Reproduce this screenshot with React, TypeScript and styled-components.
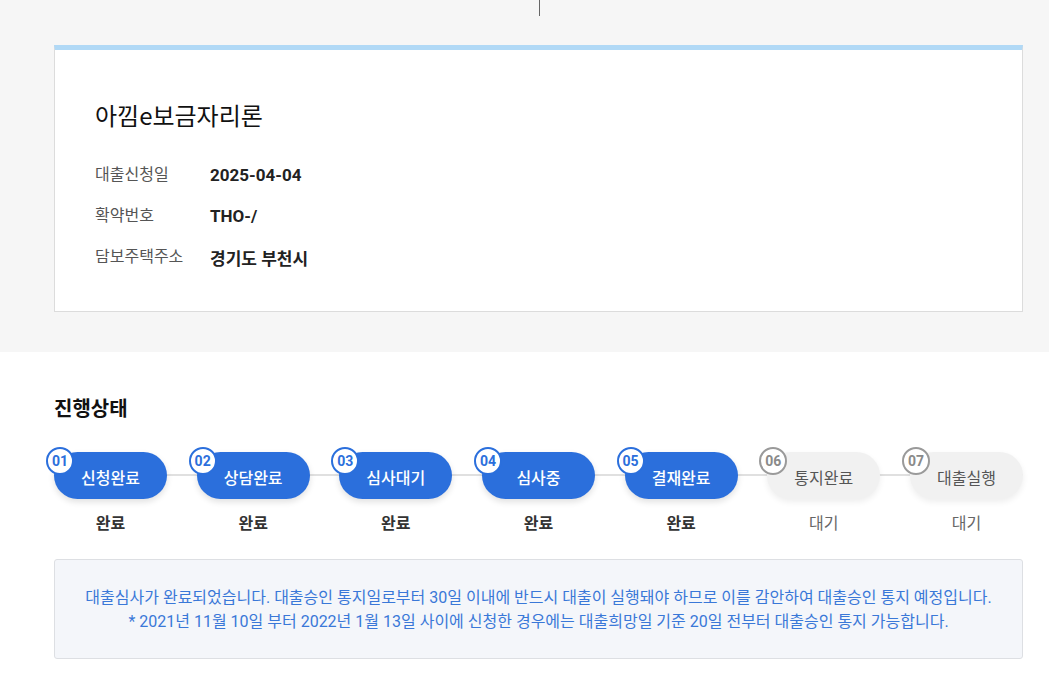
import styled, { createGlobalStyle } from 'styled-components';

const GlobalStyle = createGlobalStyle`
  * {
    box-sizing: border-box;
  }
  body {
    margin: 0;
    background: #fff;
    font-family: Roboto, 'Noto Sans CJK KR', 'Noto Sans', sans-serif;
    color: #222;
  }
`;

const LOAN_INFO = [
  { label: '대출신청일', value: '2025-04-04' },
  { label: '확약번호', value: 'THO-/' },
  { label: '담보주택주소', value: '경기도 부천시' },
];

const STEPS = [
  { no: '01', name: '신청완료', done: true },
  { no: '02', name: '상담완료', done: true },
  { no: '03', name: '심사대기', done: true },
  { no: '04', name: '심사중', done: true },
  { no: '05', name: '결재완료', done: true },
  { no: '06', name: '통지완료', done: false },
  { no: '07', name: '대출실행', done: false },
];

const App = () => {
  return (
    <>
      <GlobalStyle />
      <StyledTop>
        <StyledDivider />
        <StyledCard>
          <StyledTitle>아낌e보금자리론</StyledTitle>
          <StyledInfoList>
            {LOAN_INFO.map(({ label, value }) => (
              <StyledInfoRow key={label}>
                <StyledLabel>{label}</StyledLabel>
                <StyledValue>{value}</StyledValue>
              </StyledInfoRow>
            ))}
          </StyledInfoList>
        </StyledCard>
      </StyledTop>
      <StyledProgress>
        <StyledSectionTitle>진행상태</StyledSectionTitle>
        <StyledSteps>
          {STEPS.map(({ no, name, done }) => (
            <StyledStep key={no}>
              <StyledPill $done={done}>
                <StyledBadge $done={done}>{no}</StyledBadge>
                {name}
              </StyledPill>
              <StyledStatus $done={done}>{done ? '완료' : '대기'}</StyledStatus>
            </StyledStep>
          ))}
        </StyledSteps>
        <StyledNotice>
          대출심사가 완료되었습니다. 대출승인 통지일로부터 30일 이내에 반드시 대출이 실행돼야 하므로 이를 감안하여 대출승인 통지 예정입니다.
          <br />* 2021년 11월 10일 부터 2022년 1월 13일 사이에 신청한 경우에는 대출희망일 기준 20일 전부터 대출승인 통지 가능합니다.
        </StyledNotice>
      </StyledProgress>
    </>
  );
};

const StyledTop = styled.section`
  background: #f6f6f6;
  padding: 0 26px 40px 54px;
`;

const StyledDivider = styled.div`
  width: 1px;
  height: 16px;
  margin-left: 485px;
  margin-bottom: 29px;
  background: #666;
`;

const StyledCard = styled.div`
  background: #fff;
  border: 1px solid #dcdcdc;
  border-top: 5px solid #b1d9f6;
  padding: 49px 40px 40px;
  height: 267px;
`;

const StyledTitle = styled.h2`
  margin: 0;
  font-family: 'Noto Sans CJK KR', sans-serif;
  font-size: 24px;
  font-weight: 400;
  line-height: 32px;
  color: #111;
`;

const StyledInfoList = styled.dl`
  margin: 32px 0 0;
  display: flex;
  flex-direction: column;
  gap: 17px;
`;

const StyledInfoRow = styled.div`
  display: flex;
  align-items: center;
  height: 24px;
`;

const StyledLabel = styled.dt`
  width: 115px;
  font-family: 'Noto Sans CJK KR', sans-serif;
  font-size: 16px;
  color: #555;
  margin-top: -4px;
`;

const StyledValue = styled.dd`
  margin: 0;
  font-size: 17px;
  font-weight: 700;
  color: #222;
`;

const StyledProgress = styled.section`
  padding: 43px 26px 0 54px;
`;

const StyledSectionTitle = styled.h3`
  margin: 0;
  font-family: 'Noto Sans CJK KR', sans-serif;
  font-size: 20px;
  font-weight: 700;
  line-height: 26px;
  color: #111;
`;

const StyledSteps = styled.ol`
  position: relative;
  list-style: none;
  margin: 31px 0 0;
  padding: 0;
  display: flex;
  justify-content: space-between;
  &::before {
    content: '';
    position: absolute;
    left: 0;
    right: 0;
    top: 22px;
    height: 2px;
    background: #e0e0e0;
  }
`;

const StyledStep = styled.li`
  position: relative;
  display: flex;
  flex-direction: column;
  align-items: center;
  width: 113px;
`;

const StyledPill = styled.div<{ $done: boolean }>`
  position: relative;
  display: flex;
  align-items: center;
  justify-content: center;
  width: 100%;
  height: 47px;
  padding-top: 3px;
  border-radius: 24px;
  background: ${({ $done }) => ($done ? '#2b6fdc' : '#f1f1f1')};
  color: ${({ $done }) => ($done ? '#fff' : '#555')};
  box-shadow: 0 3px 6px rgba(0, 0, 0, ${({ $done }) => ($done ? 0.12 : 0.07)});
  font-family: 'Noto Sans CJK KR', sans-serif;
  font-size: 16px;
  font-weight: ${({ $done }) => ($done ? 500 : 400)};
`;

const StyledBadge = styled.span<{ $done: boolean }>`
  position: absolute;
  left: -8px;
  top: -5px;
  width: 28px;
  height: 28px;
  display: flex;
  align-items: center;
  justify-content: center;
  border-radius: 50%;
  background: #fff;
  border: 2px solid ${({ $done }) => ($done ? '#2b6fdc' : '#9a9a9a')};
  color: ${({ $done }) => ($done ? '#2b6fdc' : '#8a8a8a')};
  font-family: Roboto, sans-serif;
  font-size: 14px;
  font-weight: 700;
`;

const StyledStatus = styled.span<{ $done: boolean }>`
  margin-top: 11px;
  font-family: 'Noto Sans CJK KR', sans-serif;
  font-size: 16px;
  line-height: 24px;
  font-weight: ${({ $done }) => ($done ? 700 : 400)};
  color: ${({ $done }) => ($done ? '#333' : '#666')};
`;

const StyledNotice = styled.div`
  margin-top: 25px;
  padding: 26px 10px 24px;
  background: #f4f6fa;
  border: 1px solid #dddfe3;
  border-radius: 3px;
  text-align: center;
  font-size: 16px;
  line-height: 24px;
  color: #3a78d8;
`;

export default App;
